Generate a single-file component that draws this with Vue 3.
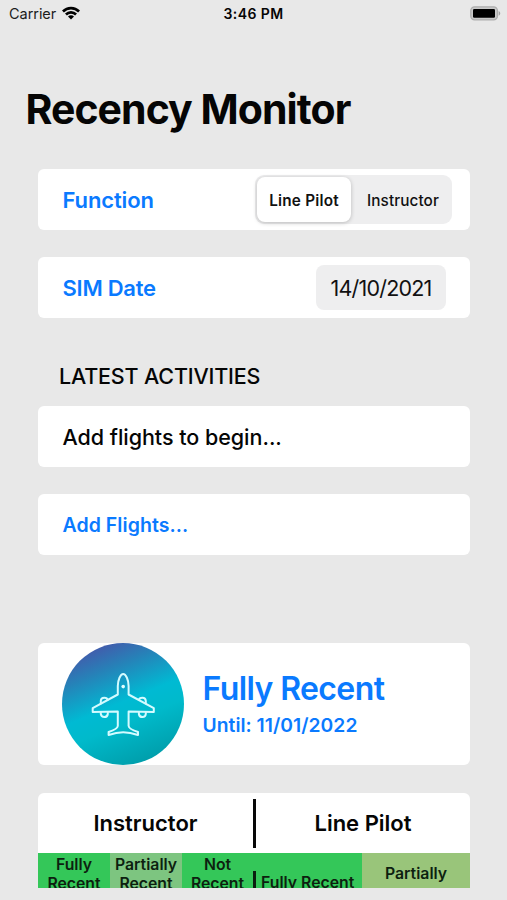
<script setup>
import { ref } from 'vue'

const functions = ['Line Pilot', 'Instructor']
const selected = ref('Line Pilot')
const simDate = '14/10/2021'
const validUntil = '11/01/2022'
</script>

<template>
  <div class="screen">
    <header class="status-bar">
      <div class="carrier">
        <span class="carrier-name">Carrier</span>
        <svg class="wifi" viewBox="0 0 18 14">
          <path d="M0 4.6A12.6 12.6 0 0 1 18 4.6L16.1 6.5A9.9 9.9 0 0 0 1.9 6.5Z" />
          <path d="M3 7.6A8.4 8.4 0 0 1 15 7.6L13.1 9.5A5.8 5.8 0 0 0 4.9 9.5Z" />
          <path d="M6 10.6A4.2 4.2 0 0 1 12 10.6L9 13.6Z" />
        </svg>
      </div>
      <span class="time">3:46 PM</span>
      <svg class="battery" viewBox="0 0 31 15">
        <rect x="0.8" y="0.8" width="26.6" height="13" rx="3.8" fill="#c9c9c9" stroke="#adadad" stroke-width="1.3" />
        <rect x="3" y="3" width="22" height="8.7" rx="1.2" fill="#000" />
        <path d="M28.6 5C30.8 5.8 30.8 8.9 28.6 9.7Z" fill="#a3a3a3" />
      </svg>
    </header>

    <h1 class="title">Recency Monitor</h1>

    <main class="content">
      <section class="card row">
        <span class="label">Function</span>
        <div class="segmented">
          <button v-for="item in functions" :key="item" class="segment"
            :class="{ active: item === selected }" @click="selected = item">
            {{ item }}
          </button>
        </div>
      </section>

      <section class="card row">
        <span class="label sim-label">SIM Date</span>
        <button class="date">{{ simDate }}</button>
      </section>

      <h2 class="section-title">LATEST ACTIVITIES</h2>
      <section class="card row">
        <span class="empty">Add flights to begin...</span>
      </section>

      <section class="card row">
        <a class="add-link">Add Flights...</a>
      </section>

      <section class="card recency">
        <svg class="plane" viewBox="0 0 122 122">
          <defs>
            <linearGradient id="sky" x1="0.22" y1="0.03" x2="0.62" y2="1">
              <stop offset="0" stop-color="#4656aa" />
              <stop offset="0.22" stop-color="#2682b8" />
              <stop offset="0.5" stop-color="#00bad3" />
              <stop offset="0.66" stop-color="#00bacb" />
              <stop offset="1" stop-color="#009eab" />
            </linearGradient>
          </defs>
          <circle cx="61" cy="61" r="61" fill="url(#sky)" />
          <g class="outline">
            <path d="M55.8 51.5V43C55.8 37 58.5 31 61.2 31S66.6 37 66.6 43V51.5L91.8 65.2V69L66.6 68.6V83Q66.8 86 76 89V92Q68 89.2 61.2 89.2T46.6 92V89Q55.6 86 55.8 83V68.6L30.7 69V65.2Z" />
            <path d="M38.8 60.5V57.8Q39 54.8 42.3 54.8Q45.3 54.8 45.6 57" />
            <path d="M76.9 57Q77.2 54.8 80.5 54.8Q83.5 54.8 83.8 57.8V60.5" />
            <path d="M38.8 69.5V71Q39.4 74 42.3 74Q45.4 74 45.8 71V69.5" />
            <path d="M76.9 69.5V71Q77.3 74 80.5 74Q83.5 74 83.8 71V69.5" />
          </g>
          <circle cx="61.2" cy="43.6" r="1.8" fill="#e2ffff" />
        </svg>
        <div class="recency-text">
          <div class="recency-state">Fully Recent</div>
          <div class="recency-until">Until: {{ validUntil }}</div>
        </div>
      </section>

      <section class="card table">
        <div class="table-head">
          <div class="head-cell">Instructor</div>
          <div class="divider"></div>
          <div class="head-cell">Line Pilot</div>
        </div>
        <div class="table-body">
          <div class="cell full">Fully<br>Recent</div>
          <div class="cell partial">Partially<br>Recent</div>
          <div class="cell full">Not<br>Recent</div>
          <div class="cell full pilot-cell">
            <span class="cell-line"></span>
            <span>Fully Recent</span>
          </div>
          <div class="cell partly">Partially</div>
        </div>
      </section>
    </main>
  </div>
</template>

<style>
body {
  margin: 0;
  background: #e8e8e8;
}
</style>

<style scoped>
.screen {
  width: 507px;
  height: 900px;
  overflow: hidden;
  background: #e8e8e8;
  color: #050505;
  font-family: Inter, "Liberation Sans", sans-serif;
}
.status-bar {
  display: grid;
  grid-template-columns: 1fr auto 1fr;
  align-items: center;
  height: 27px;
  padding: 0 6px;
  font-size: 14.5px;
}
.carrier { display: flex; align-items: center; gap: 6px; padding-left: 3px; }
.carrier-name { color: #1c1c1c; letter-spacing: -0.05px; }
.wifi { width: 18px; height: 14px; margin-bottom: 1px; }
.time { font-weight: 600; font-size: 14px; letter-spacing: 0.4px; }
.battery { width: 31px; height: 15px; justify-self: end; }

.title {
  margin: 54px 0 0 25.5px;
  font-size: 41px;
  line-height: 56px;
  font-weight: 700;
  letter-spacing: -0.95px;
}

.content { margin: 32.4px 37px 0 38px; }
.card {
  background: #fff;
  border-radius: 6px;
  margin-bottom: 27px;
}
.row {
  display: flex;
  align-items: center;
  justify-content: space-between;
  box-sizing: border-box;
  height: 61px;
  padding: 0 18px 0 24.5px;
}
button {
  border: 0;
  padding: 0;
  font-family: inherit;
  color: #111;
}
.label { color: #0a7aff; font-size: 22px; font-weight: 600; letter-spacing: -0.12px; }
.sim-label { letter-spacing: -0.25px; }
.segmented {
  display: flex;
  box-sizing: border-box;
  width: 197px;
  height: 49px;
  padding: 2px;
  border-radius: 9px;
  background: #eeeeef;
}
.segment {
  flex: 1;
  padding: 2px 0 0 5px;
  background: none;
  border-radius: 8px;
  font-size: 15.3px;
  font-weight: 500;
  letter-spacing: 0.1px;
}
.segment.active {
  flex: 0 0 94px;
  padding-left: 0;
  background: #fff;
  font-weight: 600;
  letter-spacing: 0.2px;
  box-shadow: 0 1px 4px rgba(0, 0, 0, 0.22);
}
.date {
  width: 130px;
  height: 45px;
  margin-right: 6px;
  padding-top: 1px;
  border-radius: 8px;
  background: #eeeeef;
  font-size: 21.5px;
  letter-spacing: -0.8px;
}
.section-title {
  margin: 43.5px 0 15.5px 21px;
  font-size: 21.5px;
  line-height: 29px;
  font-weight: 500;
  letter-spacing: -0.17px;
}
.empty { font-size: 21.5px; font-weight: 500; letter-spacing: -0.03px; }
.add-link { color: #0a7aff; font-size: 19.5px; font-weight: 600; letter-spacing: 0.05px; }

.recency {
  display: flex;
  align-items: center;
  height: 122px;
  margin-top: 88px;
  margin-bottom: 27.5px;
  padding-left: 24px;
}
.plane { width: 122px; height: 122px; }
.outline {
  fill: none;
  stroke: #d4fbff;
  stroke-width: 2;
  stroke-linejoin: round;
  stroke-linecap: round;
}
.recency-text { margin-left: 18.5px; padding-bottom: 1px; color: #0a7aff; }
.recency-state {
  font-size: 32px;
  line-height: 38px;
  font-weight: 600;
  letter-spacing: -0.6px;
}
.recency-until {
  margin-top: 5px;
  font-size: 19.3px;
  line-height: 24px;
  font-weight: 600;
  letter-spacing: 0.03px;
}

.table {
  height: 95px;
  margin-bottom: 0;
  overflow: hidden;
  border-radius: 6px 6px 0 0;
}
.table-head {
  display: grid;
  grid-template-columns: 215px 3px 1fr;
  align-items: center;
  height: 60.6px;
}
.head-cell { text-align: center; font-size: 22px; font-weight: 600; }
.divider { height: 49px; background: #080808; }
.table-body {
  display: grid;
  grid-template-columns: 72px 72px 71px 109px 1fr;
  height: 34.4px;
}
.cell {
  padding-top: 3px;
  text-align: center;
  color: #0d1f10;
  font-size: 15.8px;
  line-height: 18.5px;
  font-weight: 600;
}
.full { background: #34c759; }
.partial { background: #7dc580; }
.partly { background: #99c57a; padding-top: 12px; }
.pilot-cell {
  display: flex;
  gap: 5px;
  padding-top: 21px;
  white-space: nowrap;
}
.cell-line { width: 3px; height: 30px; margin-top: -3px; background: #0b1e10; }
</style>
